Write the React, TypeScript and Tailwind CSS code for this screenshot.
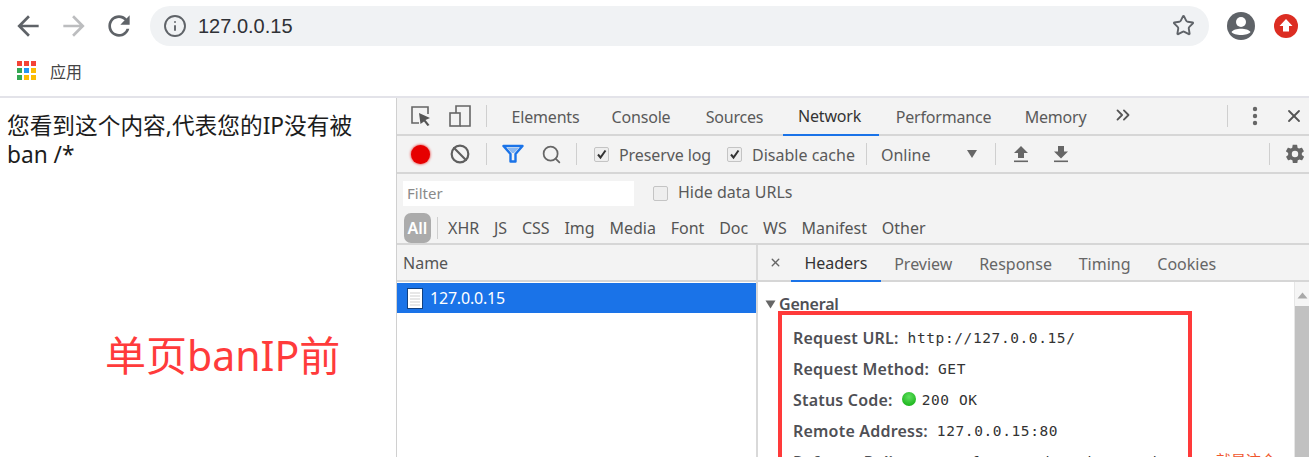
import { Info, Star, X, ChevronsRight, Search, Ban } from "lucide-react"

const sans = "font-['Noto_Sans','Open_Sans',sans-serif]"

const panelTabs = [
  { name: "Elements", width: "w-[101px]" },
  { name: "Console", width: "w-[90px]" },
  { name: "Sources", width: "w-[97px]" },
  { name: "Network", width: "w-[96px] pr-[3px]" },
  { name: "Performance", width: "w-[129px]" },
  { name: "Memory", width: "w-[95px]" },
]
const typeFilters = ["XHR", "JS", "CSS", "Img", "Media", "Font", "Doc", "WS", "Manifest", "Other"]
const detailTabs = ["Headers", "Preview", "Response", "Timing", "Cookies"]

function Sep({ className = "" }: { className?: string }) {
  return <div className={`w-px h-[22px] bg-[#cfcfcf] ${className}`} />
}

function Check({ checked }: { checked?: boolean }) {
  return (
    <span className="w-[15px] h-[15px] rounded-[2px] border border-[#c4c4c4] bg-[#eeeeee] flex items-center justify-center shrink-0">
      {checked && (
        <svg width="11" height="11" viewBox="0 0 11 11">
          <path d="M2 5.5 L4.5 8.5 L9.5 1.5" fill="none" stroke="#333" strokeWidth="2" />
        </svg>
      )}
    </span>
  )
}

function AppsGrid() {
  const colors = ["#f44336", "#f44336", "#f44336", "#34a853", "#2196f3", "#fbbc05", "#34a853", "#fbbc05", "#fbbc05"]
  return (
    <div className="grid grid-cols-3 gap-[2px] w-[19px]">
      {colors.map((c, i) => (
        <span key={i} className="w-[5px] h-[5px]" style={{ background: c }} />
      ))}
    </div>
  )
}

function BrowserBar() {
  return (
    <div className="h-[98px] bg-white border-b-2 border-[#e3e3e9] shrink-0">
      <div className="h-[51px] flex items-center pl-[12px]">
        <svg width="32" height="32" viewBox="0 0 24 24" fill="#5f6368">
          <path d="M20 11H7.83l5.59-5.59L12 4l-8 8 8 8 1.41-1.41L7.83 13H20v-2z" />
        </svg>
        <svg width="32" height="32" viewBox="0 0 24 24" fill="#bcbdbf" className="ml-[14px]">
          <path d="M4 11h12.17l-5.59-5.59L12 4l8 8-8 8-1.41-1.41L16.17 13H4v-2z" />
        </svg>
        <svg width="32" height="32" viewBox="0 0 24 24" fill="#5f6368" className="ml-[13px]">
          <path d="M17.65 6.35C16.2 4.9 14.21 4 12 4c-4.42 0-7.99 3.58-7.99 8s3.57 8 7.99 8c3.73 0 6.84-2.55 7.73-6h-2.08c-.82 2.33-3.04 4-5.65 4-3.31 0-6-2.69-6-6s2.69-6 6-6c1.66 0 3.14.69 4.22 1.78L13 11h7V4l-2.35 2.35z" />
        </svg>
        <div className="ml-[15px] w-[1059px] h-[40px] rounded-full bg-[#f0f2f4] flex items-center pl-[13px] pr-[14px]">
          <Info size={24} strokeWidth={1.9} className="text-[#5f6368]" />
          <span className="ml-[11px] text-[20px] text-[#2f3136] font-['Liberation_Sans',sans-serif]">127.0.0.15</span>
          <Star size={23} strokeWidth={2} className="text-[#5f6368] ml-auto" />
        </div>
        <svg width="28" height="28" viewBox="0 0 28 28" className="ml-[18px]">
          <circle cx="14" cy="14" r="14" fill="#5f6368" />
          <circle cx="14" cy="10" r="5" fill="#fff" />
          <path d="M4.5 20 C7 15.5 21 15.5 23.5 20 C21 24 7 24 4.5 20 Z" fill="#fff" />
        </svg>
        <svg width="24" height="24" viewBox="0 0 24 24" className="ml-[19px]">
          <circle cx="12" cy="12" r="12" fill="#dc2d22" />
          <path d="M12 5 L18.5 12 H15 V17.5 H9 V12 H5.5 Z" fill="#fff" />
        </svg>
      </div>
      <div className="h-[39px] flex items-center pl-[17px]">
        <AppsGrid />
        <span className="ml-[14px] text-[16px] text-[#444] font-['Noto_Sans_CJK_SC',sans-serif]">应用</span>
      </div>
    </div>
  )
}

function PanelTabs() {
  return (
    <div className="h-[38px] flex items-center border-b-2 border-[#d6d6d6] pl-[13px] shrink-0">
      <svg width="22" height="22" viewBox="0 0 22 22">
        <path d="M9 18 H2 V2 H18 V9" fill="none" stroke="#666" strokeWidth="1.6" />
        <path d="M9 8 L20 13 L15.5 15 L19.5 20 L17.5 21 L14 16.5 L10.5 19 Z" fill="#555" />
      </svg>
      <svg width="22" height="24" viewBox="0 0 22 24" className="ml-[17px]">
        <path d="M7 9 V2 H21 V22 H11" fill="none" stroke="#666" strokeWidth="1.6" />
        <rect x="1" y="9" width="10" height="13" fill="none" stroke="#666" strokeWidth="1.6" />
      </svg>
      <Sep className="ml-[15px]" />
      <div className="flex ml-[8px] self-stretch">
        {panelTabs.map((t) => (
          <div
            key={t.name}
            className={`flex items-center justify-center h-[38px] text-[16px] tracking-[-0.2px] ${t.width} ${t.name === "Network" ? "border-b-2 border-[#1a73e8] text-[#333]" : "text-[#5a5a5a]"}`}
          >
            {t.name}
          </div>
        ))}
      </div>
      <ChevronsRight size={22} strokeWidth={2} className="text-[#555] ml-[9px] -mt-[3px]" />
      <Sep className="ml-auto" />
      <svg width="6" height="20" viewBox="0 0 6 20" className="ml-[24px]">
        <circle cx="3" cy="3" r="2.2" fill="#666" />
        <circle cx="3" cy="10" r="2.2" fill="#666" />
        <circle cx="3" cy="17" r="2.2" fill="#666" />
      </svg>
      <X size={20} strokeWidth={2.2} className="text-[#555] ml-[26px] mr-[5px]" />
    </div>
  )
}

function NetToolbar() {
  return (
    <div className="h-[38px] flex items-center border-b-2 border-[#d6d6d6] text-[16px] text-[#5a5a5a] pl-[14px] shrink-0">
      <span className="w-[19px] h-[19px] rounded-full bg-[#e60000] shadow-[0_0_3px_#e60000]" />
      <Ban size={20} strokeWidth={2.6} className="text-[#5f5f5f] ml-[20px]" />
      <Sep className="ml-[16px]" />
      <svg width="22" height="20" viewBox="0 0 22 20" className="ml-[15px]">
        <path d="M1.5 2 H20.5 L13.5 10 V17.5 H8.5 V10 Z" fill="none" stroke="#1a73e8" strokeWidth="2.4" strokeLinejoin="round" />
        <path d="M5 4 H17 L12 9 H10 Z" fill="#8ab8f2" />
      </svg>
      <Search size={21} strokeWidth={2} className="text-[#666] ml-[17px]" />
      <Sep className="ml-[14px]" />
      <span className="ml-[17px]"><Check checked /></span>
      <span className="ml-[10px] pt-[2px] tracking-[-0.1px]">Preserve log</span>
      <span className="ml-[16px]"><Check checked /></span>
      <span className="ml-[10px] pt-[2px]">Disable cache</span>
      <Sep className="ml-[11px]" />
      <span className="ml-[14px] pt-[2px]">Online</span>
      <svg width="12" height="10" viewBox="0 0 12 10" className="ml-[36px]">
        <path d="M1 1 H11 L6 9 Z" fill="#666" />
      </svg>
      <Sep className="ml-[17px]" />
      <svg width="16" height="18" viewBox="0 0 16 18" className="ml-[17px]">
        <path d="M8 1 L15 8 H11 V13 H5 V8 H1 Z" fill="#666" />
        <rect x="1" y="15.5" width="14" height="1.6" fill="#666" />
      </svg>
      <svg width="16" height="18" viewBox="0 0 16 18" className="ml-[24px]">
        <path d="M8 13.5 L15 6.5 H11 V1 H5 V6.5 H1 Z" fill="#666" />
        <rect x="1" y="15.5" width="14" height="1.6" fill="#666" />
      </svg>
      <Sep className="ml-auto" />
      <svg width="22" height="22" viewBox="0 0 24 24" className="ml-[14px] mr-[3px]">
        <path
          fill="#666"
          d="M19.4 13c.1-.3.1-.7.1-1s0-.7-.1-1l2.1-1.6c.2-.2.2-.4.1-.6l-2-3.5c-.1-.2-.4-.3-.6-.2l-2.5 1c-.5-.4-1.1-.7-1.7-1l-.4-2.6c0-.3-.2-.5-.5-.5h-4c-.3 0-.5.2-.5.4l-.4 2.7c-.6.2-1.2.6-1.7 1l-2.5-1c-.2-.1-.5 0-.6.2l-2 3.5c-.1.2-.1.5.1.6L4.6 11c0 .3-.1.7-.1 1s0 .7.1 1l-2.1 1.6c-.2.2-.2.4-.1.6l2 3.5c.1.2.4.3.6.2l2.5-1c.5.4 1.1.7 1.7 1l.4 2.6c0 .2.2.4.5.4h4c.3 0 .5-.2.5-.4l.4-2.6c.6-.3 1.2-.6 1.7-1l2.5 1c.2.1.5 0 .6-.2l2-3.5c.1-.2.1-.5-.1-.6L19.4 13zM12 15.5a3.5 3.5 0 1 1 0-7 3.5 3.5 0 0 1 0 7z"
        />
      </svg>
    </div>
  )
}

function FilterRows() {
  return (
    <div className="h-[71px] border-b-2 border-[#d6d6d6] shrink-0 pl-[6px]">
      <div className="h-[38px] flex items-center">
        <div className="w-[231px] h-[25px] bg-white flex items-center pl-[4px] text-[15px] text-[#8a8a8a]">Filter</div>
        <span className="ml-[19px]"><Check /></span>
        <span className="ml-[10px] pb-[2px] text-[16px] text-[#5a5a5a]">Hide data URLs</span>
      </div>
      <div className="h-[31px] flex items-center text-[16px] text-[#555]">
        <span className="ml-[1px] w-[27px] h-[30px] rounded-[7px] bg-[#ababab] text-white font-semibold flex items-center justify-center">All</span>
        <div className="w-px h-[22px] bg-[#cfcfcf] ml-[6px]" />
        <div className="flex gap-[14.8px] ml-[10px]">
          {typeFilters.map((t) => (
            <span key={t}>{t}</span>
          ))}
        </div>
      </div>
    </div>
  )
}

function NameColumn() {
  return (
    <div className="w-[361px] shrink-0 border-r-2 border-[#d9d9d9]">
      <div className="h-[37px] bg-[#f3f3f3] border-b-2 border-[#d6d6d6] flex items-center pl-[6px] text-[16px] text-[#555]">Name</div>
      <div className="h-[30px] mt-[1px] bg-[#1a73e8] flex items-center pl-[10px] text-[16px] text-white tracking-[-0.2px]">
        <svg width="16" height="21" viewBox="0 0 16 21">
          <rect x="0.5" y="0.5" width="15" height="20" fill="#fff" stroke="#12407f" />
          <path d="M3 5 H13 M3 8 H13 M3 11 H13 M3 14 H13 M3 17 H13" stroke="#cfcfcf" strokeWidth="1.2" />
        </svg>
        <span className="ml-[7px]">127.0.0.15</span>
      </div>
    </div>
  )
}

function HeaderRow({ label, children }: { label: string; children: React.ReactNode }) {
  return (
    <div className="h-[31px] flex items-center whitespace-nowrap">
      <span className="text-[16px] font-semibold text-[#4f5055] tracking-[0.2px]">{label}</span>
      <span className="ml-[9px] mt-[2px] flex items-center font-['DejaVu_Sans_Mono',monospace] text-[14.5px] tracking-[0.6px] text-[#333]">{children}</span>
    </div>
  )
}

function DetailPane() {
  return (
    <div className="flex-1 min-w-0 flex flex-col relative">
      <div className="h-[37px] bg-[#f3f3f3] border-b-2 border-[#d6d6d6] flex items-center text-[16px] text-[#666] shrink-0">
        <X size={13} strokeWidth={2.6} className="text-[#666] ml-[11px] -mt-[1px]" />
        <div className="flex ml-[9px] self-stretch">
          {detailTabs.map((t) => (
            <div
              key={t}
              className={`flex items-center px-[13.4px] h-[37px] ${t === "Headers" ? "border-b-2 border-[#1a73e8] text-[#333]" : ""}`}
            >
              {t}
            </div>
          ))}
        </div>
      </div>
      <div className="flex-1 flex min-h-0">
        <div className="flex-1 min-w-0 pl-[7px] pt-[11px]">
          <div className="flex items-center h-[22px] text-[16px] font-semibold text-[#4f5055] tracking-[-0.2px]">
            <svg width="11" height="9" viewBox="0 0 11 9"><path d="M0.5 0.5 H10.5 L5.5 8.5 Z" fill="#666" /></svg>
            <span className="ml-[3px]">General</span>
          </div>
          <div className="pl-[28px] pt-[7px]">
            <HeaderRow label="Request URL:">http://127.0.0.15/</HeaderRow>
            <HeaderRow label="Request Method:">GET</HeaderRow>
            <HeaderRow label="Status Code:">
              <span className="w-[14px] h-[14px] rounded-full bg-[radial-gradient(circle_at_50%_35%,#5fe05f,#0aa80a)] mr-[6px] -mt-[4px]" />
              200 OK
            </HeaderRow>
            <HeaderRow label="Remote Address:">127.0.0.15:80</HeaderRow>
            <HeaderRow label="Referrer Policy:">no-referrer-when-downgrade</HeaderRow>
          </div>
        </div>
        <div className="w-[15px] shrink-0 bg-[#f5f5f5] border-l border-[#e6e6e6] flex flex-col items-center">
          <svg width="11" height="7" viewBox="0 0 11 7" className="mt-[10px]"><path d="M5.5 0.5 L10.5 6.5 H0.5 Z" fill="#a9a9a9" /></svg>
          <div className="w-full flex-1 bg-[#c1c1c1] mt-[7px]" />
        </div>
      </div>
      {/* red annotation drawn over the headers */}
      <div className="absolute left-[20px] top-[66px] w-[414px] h-[210px] border-[4px] border-[#ff3a3a]" />
      <span className="absolute left-[458px] top-[207px] text-[15px] leading-none text-[#f0572f] font-['Noto_Sans_CJK_SC',sans-serif] whitespace-nowrap">就是这个</span>
    </div>
  )
}

export default function App() {
  return (
    <div className={`w-[1309px] h-[457px] overflow-hidden bg-white flex flex-col ${sans}`}>
      <BrowserBar />
      <div className="flex-1 flex min-h-0">
        <div className="w-[397px] shrink-0 relative pl-[7px] pt-[13px] text-[22.7px] leading-[29px] text-[#1c1c1c] font-['Noto_Sans','Noto_Sans_CJK_SC',sans-serif] border-r border-[#d0d0d0]">
          <div className="w-[350px]">您看到这个内容,代表您的IP没有被 ban /*</div>
          {/* red caption typed onto the screenshot */}
          <span className="absolute left-[105px] top-[237px] text-[41px] leading-none text-[#ff3b3b] whitespace-nowrap">单页banIP前</span>
        </div>
        <div className="flex-1 min-w-0 flex flex-col bg-[#f3f3f3]">
          <PanelTabs />
          <NetToolbar />
          <FilterRows />
          <div className="flex-1 flex min-h-0 bg-white">
            <NameColumn />
            <DetailPane />
          </div>
        </div>
      </div>
    </div>
  )
}
